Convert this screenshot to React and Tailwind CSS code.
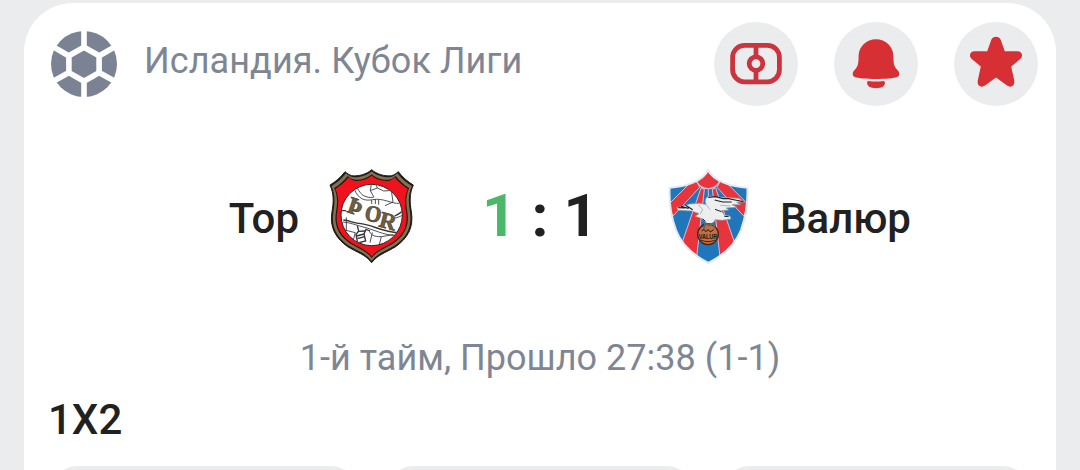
const TILES = ['home', 'draw', 'away'];

function BallIcon() {
  return (
    <svg viewBox="0 0 66 66" className="size-[66px] shrink-0">
      <circle cx="33" cy="33" r="33" fill="#7a8294" />
      <g fill="none" stroke="#fff" strokeWidth="5.6">
        <path d="M33 17.5 V-2 M33 48.5 V68 M18 25 L-1 14 M48 25 L67 14 M18 41.5 L-1 52 M48 41.5 L67 52" />
        <path d="M33 16.2 L48.1 24.7 V41.6 L33 50.2 L17.9 41.6 V24.7 Z" />
      </g>
    </svg>
  );
}

function PitchIcon() {
  return (
    <svg viewBox="0 0 84 84" className="size-full" fill="none" stroke="#cb343c" strokeWidth="4.8">
      <rect x="18.6" y="23.4" width="46.8" height="36.4" rx="12" />
      <circle cx="42" cy="41.6" r="6.8" />
      <path d="M42 24 V35 M42 48.4 V60" />
    </svg>
  );
}

function BellIcon() {
  return (
    <svg viewBox="0 0 84 84" className="size-full" fill="#d63035">
      <path d="M42 17.2 C51.5 17.2 59.2 24.5 59.4 33.5 C59.5 42 59.8 44.2 63.5 48 C65.6 50.2 66.2 53.8 63.2 55 C57 57.6 27 57.6 20.8 55 C17.8 53.8 18.4 50.2 20.5 48 C24.2 44.2 24.5 42 24.6 33.5 C24.8 24.5 32.5 17.2 42 17.2 Z" />
      <path d="M34.6 59 Q42 60 49.4 59 Q51 59 51 61 Q50.6 66.2 42 66.2 Q33.4 66.2 33 61 Q33 59 34.6 59 Z" />
    </svg>
  );
}

function StarIcon() {
  return (
    <svg viewBox="0 0 84 84" className="size-full" fill="#d63035">
      <path d="M37.2 18 C38.8 13.6 45.2 13.6 46.8 18 L50.8 29.2 H63.2 C68.6 29.2 69.6 34.4 65.6 37.6 L57.2 44.4 L60.2 58.3 C61.4 63.6 57 66.4 53 63.6 L42 55.6 L31 63.6 C27 66.4 22.6 63.6 23.8 58.3 L26.8 44.4 L18.4 37.6 C14.4 34.4 15.4 29.2 20.8 29.2 H33.2 Z" />
    </svg>
  );
}

function ThorCrest() {
  const shield =
    'M155 29 C141 42 116 50 95 47 C88 45 81 40 75 35 C63 51 46 66 30 75 C42 101 41 126 36 155 C28 204 48 235 83 260 C110 277 136 283 155 308 C174 283 200 277 227 260 C262 235 282 204 274 155 C269 126 268 101 280 75 C264 66 247 51 235 35 C229 40 222 45 215 47 C194 50 169 42 155 29 Z';
  return (
    <svg viewBox="12 24 288 288" className="size-24 shrink-0">
      <defs>
        <clipPath id="thor-ball">
          <circle cx="155" cy="165" r="91" />
        </clipPath>
      </defs>
      <path d={shield} fill="#1d1a18" stroke="#1d1a18" strokeWidth="3" />
      <path d={shield} fill="#85704f" transform="translate(155 165) scale(.965) translate(-155 -165)" />
      <path d={shield} fill="#1d1a18" transform="translate(155 165) scale(.9) translate(-155 -165)" />
      <path d={shield} fill="#f0121c" transform="translate(155 165) scale(.87) translate(-155 -165)" />
      <circle cx="155" cy="165" r="92" fill="#fff" stroke="#36231f" strokeWidth="3" />
      <g clipPath="url(#thor-ball)" fill="none" stroke="#35343a" strokeWidth="2.6">
        <path d="M103 88 C115 116 132 124 158 119 C190 113 214 132 238 130" />
        <path d="M112 84 C123 107 138 114 160 112 M154 73 L151 92 L162 112" />
        <path d="M151 92 L172 84 L191 93 L218 91 M172 84 L168 73 M214 91 L219 126 L195 137" />
        <path d="M155 120 V132 M166 118 V132 M176 120 V134" />
        <path d="M65 152 L78 152 M224 168 C231 165 239 160 247 154" strokeWidth="4" />
        <path d="M225 174 C232 173 239 170 247 166" />
        <path d="M70 180 C91 181 100 190 123 191 C155 194 190 217 235 218" strokeWidth="4" />
        <path d="M69 186 C91 188 107 195 126 200 C158 207 191 226 229 227" />
        <path d="M79 172 V212 M74 210 L106 218 L99 243" />
        <path d="M112 197 L116 213 L108 224 L113 249 L137 243 L132 222 L138 208 L150 213" strokeWidth="4" />
        <path d="M110 228 L132 222 M112 236 L134 230 M115 214 L136 213" strokeWidth="4" />
        <path d="M147 210 C151 225 163 231 184 230 L220 224 M184 230 L177 257 M157 217 L150 248" />
      </g>
      <g fontFamily="'Liberation Serif', serif" fontWeight="700" fill="#6f6044" stroke="#4a3f2b" strokeWidth="2">
        <text x="78" y="155" fontSize="72" transform="rotate(18 78 155)">Þ</text>
        <text x="131" y="180" fontSize="69" textLength="50" lengthAdjust="spacingAndGlyphs" transform="rotate(10 131 180)">O</text>
        <text x="174" y="199" fontSize="68" textLength="50" lengthAdjust="spacingAndGlyphs" transform="rotate(15 174 199)">R</text>
      </g>
    </svg>
  );
}

function ValurCrest() {
  const shield =
    'M159 31 C145 62 92 81 44 83 C42 121 46 164 63 210 C79 253 116 286 160 309 C204 286 241 253 258 210 C274 164 279 121 277 83 C228 81 175 62 159 31 Z';
  return (
    <svg viewBox="15 24 288 288" className="size-24 shrink-0">
      <defs>
        <clipPath id="valur-shield">
          <path d={shield} />
        </clipPath>
      </defs>
      <g clipPath="url(#valur-shield)">
        <path fill="#1f76bb" d="M30 20 H290 V315 H30 Z" />
        <g fill="#e8343c" stroke="#d9bccf" strokeWidth="3">
          <path d="M108 66 L124 62 L134 82 L54 168 L38 136 Z" />
          <path d="M212 66 L196 62 L186 82 L266 168 L282 136 Z" />
          <path d="M138 84 L148 88 L124 300 L82 246 Z" />
          <path d="M182 84 L172 88 L196 300 L238 246 Z" />
        </g>
        <path d="M160 86 V140" stroke="#d9bccf" strokeWidth="3" />
        <path d="M125 65 L159 31 L194 65 C185 81 174 86 160 86 C145 86 133 81 125 65 Z" fill="#e8343c" stroke="#d9bccf" strokeWidth="4" />
      </g>
      <path d={shield} fill="none" stroke="#e3e8f1" strokeWidth="6" />
      <path
        d="M65 143 L103 132 L130 130 C139 129 145 133 153 133 C148 120 152 110 166 108 L206 112 L251 115 L270 126 L245 127 L258 134 L231 134 L246 142 L214 144 L222 150 L199 152 L209 166 L225 168 L228 177 L201 181 L180 179 L174 192 L155 190 L141 176 L120 169 L132 161 L110 153 L69 151 Z"
        fill="#eceef0"
        stroke="#8a929a"
        strokeWidth="2"
      />
      <g fill="none" stroke="#202429" strokeWidth="3.5">
        <path d="M70 143 L90 144 M78 139 L101 145 M91 135 L113 149" />
        <path d="M160 112 L182 110 L204 116 L221 116 L240 120 L265 125 M179 120 L203 126 L230 126" />
        <path d="M208 169 L221 170 M143 176 L151 184 M180 148 L199 155" strokeWidth="3" />
      </g>
      <path d="M130 134 L143 149 L135 163 M153 133 L165 149 M196 136 L226 138" fill="none" stroke="#aeb7bd" strokeWidth="3" />
      <circle cx="159" cy="223" r="31" fill="#c46f3e" stroke="#3a2520" strokeWidth="4" />
      <path d="M146 206 L151 191 L163 196 L174 190 L179 204" fill="none" stroke="#6b6560" strokeWidth="6" />
      <path d="M137 240 Q159 250 181 240" fill="none" stroke="#3d211b" strokeWidth="3" />
      <text x="131" y="236" fontFamily="'Liberation Sans', sans-serif" fontWeight="700" fontSize="22" textLength="56" lengthAdjust="spacingAndGlyphs" fill="#201818">
        VALUR
      </text>
      <path d="M140 213 L147 208 L152 215 L160 209 L166 216 L176 209" fill="none" stroke="#201818" strokeWidth="3" />
    </svg>
  );
}

function RoundButton({ label, children }) {
  return (
    <button type="button" aria-label={label} className="size-[84px] rounded-full bg-[#ebeced]">
      {children}
    </button>
  );
}

export default function App() {
  return (
    <div className="h-[470px] overflow-hidden bg-[#ebecee] px-6 pt-[3px] font-['Roboto',sans-serif]">
      <main className="h-[520px] rounded-t-[49px] bg-white pt-[18.5px]">
        <header className="flex h-[84px] items-center pr-[18px] pl-[27px]">
          <BallIcon />
          <h1 className="mb-1.5 ml-[27px] text-[36px] leading-[42px] tracking-[0.08px] whitespace-nowrap text-[#7e8694]">
            Исландия. Кубок Лиги
          </h1>
          <div className="ml-auto flex gap-9">
            <RoundButton label="Поле"><PitchIcon /></RoundButton>
            <RoundButton label="Уведомления"><BellIcon /></RoundButton>
            <RoundButton label="Избранное"><StarIcon /></RoundButton>
          </div>
        </header>

        <section className="mt-[62.5px] flex h-24 items-center text-[42px] font-medium text-[#212121]">
          <div className="flex flex-1 items-center justify-end gap-[25px]">
            <span className="pt-1.5 leading-[48px]">Тор</span>
            <ThorCrest />
          </div>
          <div className="flex w-60 items-center justify-center gap-[15px] text-[60px] leading-[70px] font-bold">
            <span className="text-[#4bb768]">1</span>
            <span>:</span>
            <span>1</span>
          </div>
          <div className="flex flex-1 items-center gap-6">
            <ValurCrest />
            <span className="pt-1.5 leading-[48px]">Валюр</span>
          </div>
        </section>

        <p className="mt-[73px] text-center text-[36px] leading-[42px] tracking-[0.03px] text-[#7e8694]">
          1-й тайм, Прошло 27:38 (1-1)
        </p>

        <h2 className="mt-4 pl-6 text-[42px] leading-[49px] font-medium text-[#212121]">1X2</h2>

        <div className="mt-[21.5px] grid grid-cols-3 gap-6 px-6">
          {TILES.map((tile) => (
            <div key={tile} className="h-24 rounded-[30px] bg-[#ebeced]" />
          ))}
        </div>
      </main>
    </div>
  );
}
